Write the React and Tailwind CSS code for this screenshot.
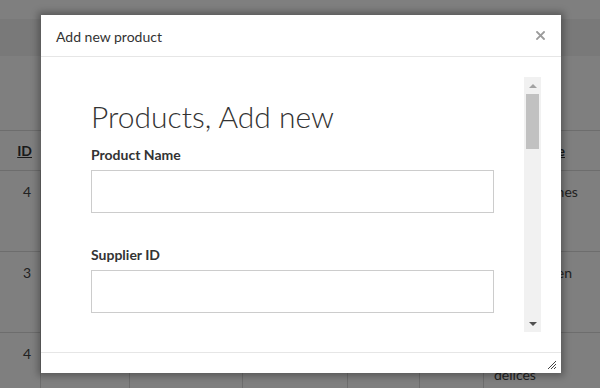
import React from "react";

const columns = [
  { w: "w-[41px]" },
  { w: "w-[89px]" },
  { w: "w-[113px]" },
  { w: "w-[105px]" },
  { w: "w-[72px]" },
  { w: "w-[64px]" },
  { w: "flex-1" },
];

const rows = [
  { id: "4", last: ["Butter scones"] },
  { id: "3", last: ["Schokoladen"] },
  { id: "4", last: ["Pâtisserie", "delices"] },
];

const CloseIcon = () => (
  <svg width="9" height="9" viewBox="0 0 9 9" className="block">
    <path d="M1 1 L8 8 M8 1 L1 8" stroke="#9b9b9b" strokeWidth="1.8" strokeLinecap="square" />
  </svg>
);

const ResizeGrip = () => (
  <svg width="10" height="10" viewBox="0 0 10 10" className="block">
    <path d="M9 1 L1 9 M9 4 L4 9 M9 7 L7 9" stroke="#444" strokeWidth="1" />
  </svg>
);

// the grid that sits behind the overlay
const BackgroundPage = () => (
  <div className="absolute inset-0 bg-white text-[14px] text-[#444]">
    <div className="h-[19px]" />
    <div className="h-[37px] bg-[#f3f3f3]" />
    <div className="h-[74px]" />
    <div className="flex h-[41px] border-t border-b border-[#dadada]">
      {columns.map((c, i) => (
        <div key={i} className={`${c.w} flex items-center ${i === 0 ? "justify-end pr-[9px]" : "pl-[10px]"}`}>
          {i === 0 && <span className="font-bold underline text-[#333]">ID</span>}
          {i === 6 && <span className="font-bold underline text-[#333]">Warehouse</span>}
        </div>
      ))}
    </div>
    {rows.map((r, ri) => (
      <div key={ri} className="flex h-[81px] border-b border-[#dadada]">
        {columns.map((c, i) => (
          <div
            key={i}
            className={`${c.w} pt-[10px] leading-[21px] ${i < 6 ? "border-r border-[#dadada]" : ""} ${i === 0 ? "text-right pr-[9px]" : "pl-[10px]"}`}
          >
            {i === 0 && r.id}
            {i === 6 && r.last.map((t, k) => <div key={k}>{t}</div>)}
          </div>
        ))}
      </div>
    ))}
  </div>
);

const ScrollBar = () => (
  <div className="w-[17px] bg-[#f1f1f1] flex flex-col items-center">
    <div className="h-[17px] flex items-center justify-center">
      <div className="w-0 h-0 border-l-[4px] border-r-[4px] border-b-[4px] border-l-transparent border-r-transparent border-b-[#a3a3a3]" />
    </div>
    <div className="w-[13px] h-[55px] bg-[#c1c1c1]" />
    <div className="flex-1" />
    <div className="h-[17px] flex items-center justify-center">
      <div className="w-0 h-0 border-l-[4px] border-r-[4px] border-t-[4px] border-l-transparent border-r-transparent border-t-[#505050]" />
    </div>
  </div>
);

const Field = ({ label, className = "" }) => (
  <div className={className}>
    <label className="block text-[14px] leading-[20px] font-bold text-[#333]">{label}</label>
    <div className="mt-[5px] h-[43px] border border-[#cccccc] bg-white" />
  </div>
);

export default function App() {
  return (
    <div
      className="relative w-[600px] h-[388px] overflow-hidden"
      style={{ fontFamily: "Lato, 'Open Sans', sans-serif" }}
    >
      <BackgroundPage />
      <div className="absolute inset-0 bg-black/50" />

      <div className="absolute left-[41px] top-[15px] w-[520px] h-[358px] bg-white flex flex-col shadow-[0_0_7px_3px_rgba(0,0,0,0.3)]">
        <div className="h-[42px] shrink-0 flex items-center justify-between pl-[15px] pr-[16px] border-b border-[#e6e6e6]">
          <span className="text-[14px] text-[#333] mt-[1px]">Add new product</span>
          <CloseIcon />
        </div>

        <div className="h-[295px] shrink-0 p-[20px]">
          <div className="flex h-[255px]">
            <div className="w-[463px] overflow-hidden px-[30px] pt-[24px]">
              <h1 className="text-[30px] leading-[30px] font-light text-[#333]">Products, Add new</h1>
              <Field label="Product Name" className="mt-[14px]" />
              <Field label="Supplier ID" className="mt-[32px]" />
            </div>
            <ScrollBar />
          </div>
        </div>

        <div className="flex-1 border-t border-[#e6e6e6] flex items-end justify-end pr-[4px] pb-[3px]">
          <ResizeGrip />
        </div>
      </div>
    </div>
  );
}
